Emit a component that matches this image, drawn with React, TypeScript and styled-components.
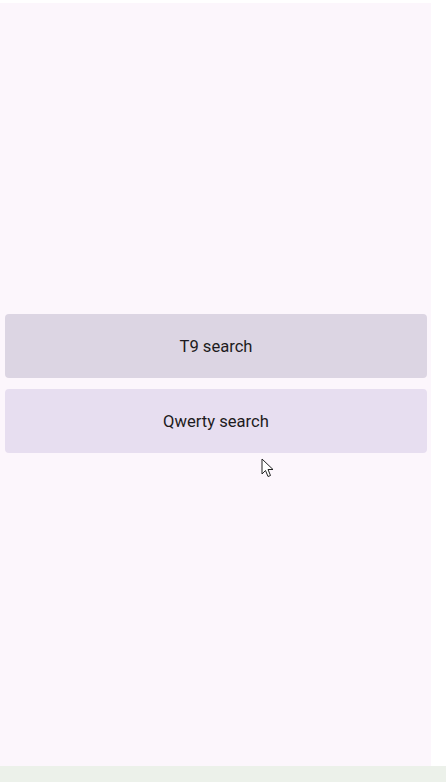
import styled, { createGlobalStyle } from "styled-components";

const GlobalStyle = createGlobalStyle`
  html, body {
    margin: 0;
    padding: 0;
    background: #ffffff;
  }
  body {
    font-family: Roboto, "Noto Sans", "Liberation Sans", sans-serif;
  }
`;

const Screen = styled.div`
  width: 446px;
  height: 782px;
  display: flex;
  flex-direction: column;
  overflow: hidden;
`;

const Top = styled.div`
  height: 3px;
  flex: none;
`;

const Body = styled.div`
  flex: 1;
  display: flex;
`;

const Content = styled.main`
  width: 431px;
  background: #fcf6fc;
  display: flex;
  flex-direction: column;
  justify-content: center;
  gap: 11px;
  padding: 0 4px 2px 5px;
  box-sizing: border-box;
  position: relative;
`;

const NavBar = styled.div`
  height: 16px;
  flex: none;
  background: #ecf1ea;
`;

const SearchButton = styled.button<{ $pressed?: boolean }>`
  height: 64px;
  border: none;
  border-radius: 4px;
  background: ${({ $pressed }) => ($pressed ? "#dcd5e3" : "#e7def0")};
  color: #1d1b20;
  font-family: Roboto, "Noto Sans", "Liberation Sans", sans-serif;
  font-size: 16.6px;
  cursor: pointer;
`;

const Cursor = styled.svg`
  position: absolute;
  left: 261px;
  top: 455px;
  width: 16px;
  height: 22px;
  pointer-events: none;
`;

export default function App() {
  return (
    <Screen>
      <GlobalStyle />
      <Top />
      <Body>
        <Content>
          <SearchButton $pressed>T9 search</SearchButton>
          <SearchButton>Qwerty search</SearchButton>
          <Cursor viewBox="0 0 16 22">
            <path
              d="M1 1 L1 16 L4.5 12.5 L7 18.5 L9.5 17.5 L7 11.5 L12 11.5 Z"
              fill="#ffffff"
              stroke="#222"
              strokeWidth="1"
              strokeLinejoin="round"
            />
          </Cursor>
        </Content>
      </Body>
      <NavBar />
    </Screen>
  );
}
